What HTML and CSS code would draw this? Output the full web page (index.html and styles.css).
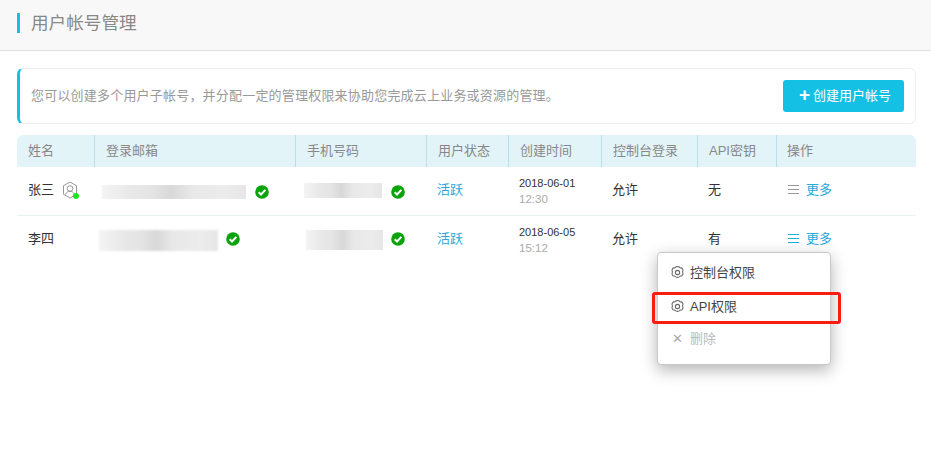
FILE: index.html
```html
<!DOCTYPE html>
<html lang="zh">
<head>
<meta charset="utf-8">
<title>用户帐号管理</title>
<link rel="stylesheet" href="styles.css">
</head>
<body>
<svg class="defs" width="0" height="0" aria-hidden="true">
  <symbol id="check" viewBox="0 0 14 14"><circle cx="7" cy="7" r="6.800" fill="#0aa30a"/><path d="M3.700 7.200 6 9.500l4.400-4.600" fill="none" stroke="#fff" stroke-width="2"/></symbol>
  <symbol id="gear" viewBox="0 0 14 14"><path d="M5.200 1.500c.5-.7 3.100-.7 3.600 0 .4.600.9.800 1.600.7.900-.1 2.100 2 1.600 2.800-.4.600-.4 1.400 0 2 .5.800-.7 2.900-1.600 2.800-.7-.1-1.200.1-1.600.7-.5.700-3.100.7-3.600 0-.4-.6-.9-.8-1.600-.7-.9.100-2.100-2-1.600-2.800.4-.6.4-1.400 0-2-.5-.8.700-2.900 1.600-2.800.7.100 1.200-.1 1.600-.7z" transform="translate(0 .5)" fill="none" stroke="#666"/><circle cx="7" cy="7" r="2" fill="none" stroke="#666"/></symbol>
  <symbol id="lines" viewBox="0 0 11 10"><path d="M0 .5h11M0 4.500h11M0 8.500h11" stroke="currentColor" stroke-width="1"/></symbol>
</svg>
<header class="top"><h1 class="title">用户帐号管理</h1></header>
<main class="main">
  <section class="notice">
    <p class="notice-text">您可以创建多个用户子帐号，并分配一定的管理权限来协助您完成云上业务或资源的管理。</p>
    <button class="create"><span class="plus">+</span>创建用户帐号</button>
  </section>
  <section class="table">
    <div class="row head">
      <div class="cell">姓名</div><div class="cell">登录邮箱</div><div class="cell">手机号码</div><div class="cell">用户状态</div><div class="cell">创建时间</div><div class="cell">控制台登录</div><div class="cell">API密钥</div><div class="cell last">操作</div>
    </div>
    <div class="row body">
      <div class="cell name">张三
        <span class="badge"><svg width="16" height="18" viewBox="0 0 16 18"><path d="M8 1l6.500 3.700v8.600L8 17l-6.500-3.700V4.700z" fill="none" stroke="#999"/><circle cx="8" cy="7.500" r="2.800" fill="none" stroke="#999"/><path d="M3.500 13.500c.8-2.300 2.500-3.200 4.500-3.200s3.700.9 4.500 3.200" fill="none" stroke="#999"/></svg><i class="dot"></i></span>
      </div>
      <div class="cell masked m-a"><span class="blur email1"></span><svg class="ok" width="14" height="14"><use href="#check"/></svg></div>
      <div class="cell masked m-b"><span class="blur phone1"></span><svg class="ok" width="14" height="14"><use href="#check"/></svg></div>
      <div class="cell tight"><a class="link">活跃</a></div>
      <div class="cell tight date"><span>2018-06-01</span><span class="time">12:30</span></div>
      <div class="cell tight">允许</div>
      <div class="cell tight">无</div>
      <div class="cell last"><a class="more dim"><svg class="lines" width="11" height="10"><use href="#lines"/></svg>更多</a></div>
    </div>
    <div class="row body end">
      <div class="cell name">李四</div>
      <div class="cell masked m-c"><span class="blur email2"></span><svg class="ok" width="14" height="14"><use href="#check"/></svg></div>
      <div class="cell masked m-d"><span class="blur phone2"></span><svg class="ok" width="14" height="14"><use href="#check"/></svg></div>
      <div class="cell tight"><a class="link">活跃</a></div>
      <div class="cell tight date"><span>2018-06-05</span><span class="time">15:12</span></div>
      <div class="cell tight">允许</div>
      <div class="cell tight">有</div>
      <div class="cell last"><a class="more"><svg class="lines" width="11" height="10"><use href="#lines"/></svg>更多</a></div>
    </div>
    <div class="menu">
      <div class="item"><svg width="15" height="15"><use href="#gear"/></svg>控制台权限</div>
      <div class="item shifted"><svg width="15" height="15"><use href="#gear"/></svg>API权限</div>
      <div class="item off"><span class="x">✕</span>删除</div>
    </div>
    <div class="redbox"></div>
  </section>
</main>
</body>
</html>
```

FILE: styles.css
```css
* { box-sizing: border-box; }
html, body { margin: 0; }
body { background: #fff; color: #333; font: 13px/20px "Liberation Sans", "Noto Sans CJK SC", sans-serif; overflow: hidden; height: 457px; }
.defs { position: absolute; }
.top { height: 51px; background: #f8f8f8; border-bottom: 1px solid #e0e0e0; padding: 13px 17px 0; }
.title { margin: 0; height: 20px; border-left: 3px solid #14c1e4; padding-left: 11px; font-size: 17.6px; font-weight: 400; line-height: 20px; color: #888; }
.main { padding: 17px 15px 0 17px; }
.notice { height: 56px; display: flex; align-items: center; justify-content: space-between; border: 1px solid #eee; border-left: 3px solid #14c1e4; border-radius: 6px; padding: 0 11px 0 11px; }
.notice-text { margin: 0; color: #999; font-size: 13px; letter-spacing: .2px; }
.create { width: 121px; height: 32px; border: 0; border-radius: 3px; background: #14c1e4; color: #fff; font: 13px/32px "Liberation Sans", "Noto Sans CJK SC", sans-serif; padding: 0 0 0 3px; display: flex; align-items: center; justify-content: center; }
.plus { font-size: 19px; font-weight: 700; margin-right: 3px; line-height: 28px; position: relative; top: -1px; }
.table { margin-top: 11px; position: relative; }
.row { display: grid; grid-template-columns: 78px 201px 131px 82px 93px 96px 79px 1fr; }
.head { height: 32px; background: #e3f4f8; border-radius: 6px 6px 0 0; color: #888; }
.head .cell { border-right: 1px solid #b9e0ea; padding-left: 11px; }
.head .last { border-right: 0; padding-left: 10px; }
.body { height: 49px; border-bottom: 1px solid #e8f2f2; }
.body.end { border-bottom: 0; }
.cell { display: flex; align-items: center; padding-left: 11px; white-space: nowrap; min-width: 0; }
.body .cell { padding-bottom: 3px; }
.body .tight { padding-left: 10px; }
.name { color: #333; }
.badge { position: relative; display: inline-flex; margin-left: 8px; }
.dot { position: absolute; right: -1px; bottom: 0; width: 6px; height: 6px; border-radius: 50%; background: #1ee61e; }
.body .masked { padding-left: 7px; }
.body .m-b { padding-left: 8px; }
.body .m-c { padding-left: 4px; }
.body .m-d { padding-left: 10px; }
.blur { display: block; background: linear-gradient(90deg, #f4f4f4, #e8e8e8 20%, #e4e4e4 35%, #d8d8d8 48%, #e8e8e8 62%, #ececec 85%, #e6e6e6); }
.email1 { width: 144px; height: 14px; margin-top: 5px; }
.phone1 { width: 78px; height: 15px; margin-top: 1px; }
.email2 { width: 119px; height: 21px; margin-top: 2px; filter: blur(1px); }
.phone2 { width: 77px; height: 20px; margin-top: 2px; }
.ok { margin-left: 9px; margin-top: 5px; flex: none; }
.m-c .ok { margin-left: 8px; margin-top: 0; }
.m-d .ok { margin-left: 8px; margin-top: 0; }
.link { color: #2aa8dc; }
.date { flex-direction: column; align-items: flex-start; justify-content: center; font-size: 11px; line-height: 15px; color: #333; }
.body .date { padding-bottom: 0; }
.time { color: #aaa; font-size: 11.5px; margin-top: 1px; }
.more { color: #2aa8dc; display: flex; align-items: center; }
.lines { margin-right: 7px; color: #14b4d8; }
.more.dim .lines { color: #999; }
.menu { position: absolute; left: 640px; top: 117px; width: 174px; height: 113px; background: #fff; border: 1px solid #c8c8c8; border-radius: 4px; box-shadow: 0 5px 16px rgba(0,0,0,.3); padding-top: 3px; }
.item { height: 33px; display: flex; align-items: center; padding-left: 12px; color: #444; }
.item svg { margin-right: 5px; }
.shifted { padding-top: 2px; }
.off { color: #bbb; padding-left: 14px; }
.x { width: 13px; margin-right: 5px; font-size: 13px; color: #aaa; }
.redbox { position: absolute; left: 635px; top: 157px; width: 189px; height: 32px; border: 3px solid #fb1c10; border-radius: 3px; }
```
